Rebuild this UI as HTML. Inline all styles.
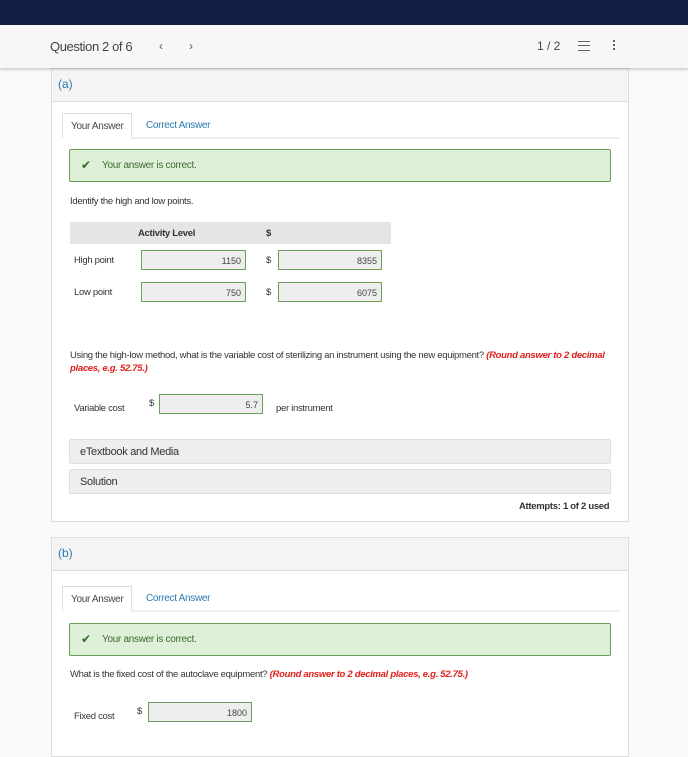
<!DOCTYPE html>
<html><head><style>
*{margin:0;padding:0;box-sizing:border-box}
body{width:688px;height:737px;overflow:hidden;background:#f9f9f9;font-family:"Liberation Sans",sans-serif;position:relative;color:#333}
.a{position:absolute}
.top{left:0;top:0;width:688px;height:25px;background:#131f45}
.hdr{left:0;top:25px;width:688px;height:43px;background:#f7f7f7;box-shadow:0 1px 3px rgba(0,0,0,.25);z-index:2}
.card{left:51px;width:578px;background:#fff;border:1px solid #ddd}
.ch{left:0;top:0;width:100%;height:33px;background:#f4f4f4;border-bottom:1px solid #ddd;color:#2a7bb0;font-size:12px;padding:8px 6px}
.tabs{left:10px;width:558px;height:26px;border-bottom:2px solid #eee}
.tab1{left:0;top:0;height:26px;padding:7px 8px;border:1px solid #ddd;border-bottom:2px solid #fff;font-size:10px;color:#444;background:#fff;letter-spacing:-.3px}
.tab2{left:84px;top:7px;font-size:10px;color:#2a7bb0;letter-spacing:-.3px}
.ok{left:17px;width:542px;height:33px;background:#dff0d8;border:1px solid #6a9e5a;border-radius:2px;font-size:10px;color:#3c6a30;padding:10px 0 0 32px;letter-spacing:-.3px}
.ok:before{content:"✔";position:absolute;left:11px;top:8px;color:#2e6b22;font-size:12px}
.t{font-size:9.5px;color:#333;letter-spacing:-.3px}
.inp{height:20px;background:#eee;border:1px solid #6a9e5a;font-size:9px;text-align:right;padding:5px 4px;color:#444}
.gray{background:#eee;border:1px solid #ddd;border-radius:2px;left:17px;width:542px;height:25px;font-size:11px;padding:6px 10px;color:#333;letter-spacing:-.3px}
</style></head><body>
<div class="a top"></div>
<div class="a hdr">
<div class="a" style="left:50px;top:14px;font-size:13px;color:#444;letter-spacing:-.4px">Question 2 of 6</div>
<div class="a" style="left:159px;top:14px;font-size:12px;color:#555">‹</div>
<div class="a" style="left:189px;top:14px;font-size:12px;color:#555">›</div>
<div class="a" style="left:537px;top:14px;font-size:12px;color:#444">1 / 2</div>
<div class="a" style="left:578px;top:16px;width:12px;height:10px;border-top:1.5px solid #666;border-bottom:1.5px solid #666"><div style="margin-top:3px;border-top:1.5px solid #666"></div></div>
<div class="a" style="left:613px;top:14px;width:2px;height:11px;background:radial-gradient(circle,#555 1px,transparent 1.2px) 0 0/2px 4px"></div>
</div>

<div class="a card" style="top:68px;height:454px">
<div class="a ch">(a)</div>
<div class="a tabs" style="top:44px"><div class="a tab1">Your Answer</div><div class="a tab2">Correct Answer</div></div>
<div class="a ok" style="top:80px">Your answer is correct.</div>
<div class="a t" style="left:18px;top:127px">Identify the high and low points.</div>
<div class="a" style="left:18px;top:153px;width:321px;height:22px;background:#e5e5e5"></div>
<div class="a t" style="left:86px;top:159px;font-weight:bold">Activity Level</div>
<div class="a t" style="left:214px;top:159px;font-weight:bold">$</div>
<div class="a t" style="left:22px;top:186px">High point</div>
<div class="a inp" style="left:89px;top:181px;width:105px">1150</div>
<div class="a t" style="left:214px;top:186px">$</div>
<div class="a inp" style="left:226px;top:181px;width:104px">8355</div>
<div class="a t" style="left:22px;top:218px">Low point</div>
<div class="a inp" style="left:89px;top:213px;width:105px">750</div>
<div class="a t" style="left:214px;top:218px">$</div>
<div class="a inp" style="left:226px;top:213px;width:104px">6075</div>
<div class="a t" style="left:18px;top:280px;width:545px;line-height:13px">Using the high-low method, what is the variable cost of sterilizing an instrument using the new equipment? <i style="color:#e0201a;font-weight:bold">(Round answer to 2 decimal places, e.g. 52.75.)</i></div>
<div class="a t" style="left:22px;top:334px">Variable cost</div>
<div class="a t" style="left:97px;top:329px">$</div>
<div class="a inp" style="left:107px;top:325px;width:104px">5.7</div>
<div class="a t" style="left:224px;top:334px">per instrument</div>
<div class="a gray" style="top:370px">eTextbook and Media</div>
<div class="a gray" style="top:400px">Solution</div>
<div class="a t" style="left:467px;top:432px;font-weight:bold;color:#333">Attempts: 1 of 2 used</div>
</div>

<div class="a card" style="top:537px;height:220px">
<div class="a ch">(b)</div>
<div class="a tabs" style="top:48px"><div class="a tab1">Your Answer</div><div class="a tab2">Correct Answer</div></div>
<div class="a ok" style="top:85px">Your answer is correct.</div>
<div class="a t" style="left:18px;top:131px">What is the fixed cost of the autoclave equipment? <i style="color:#e0201a;font-weight:bold">(Round answer to 2 decimal places, e.g. 52.75.)</i></div>
<div class="a t" style="left:22px;top:173px">Fixed cost</div>
<div class="a t" style="left:85px;top:168px">$</div>
<div class="a inp" style="left:96px;top:164px;width:104px">1800</div>
</div>
</body></html>
